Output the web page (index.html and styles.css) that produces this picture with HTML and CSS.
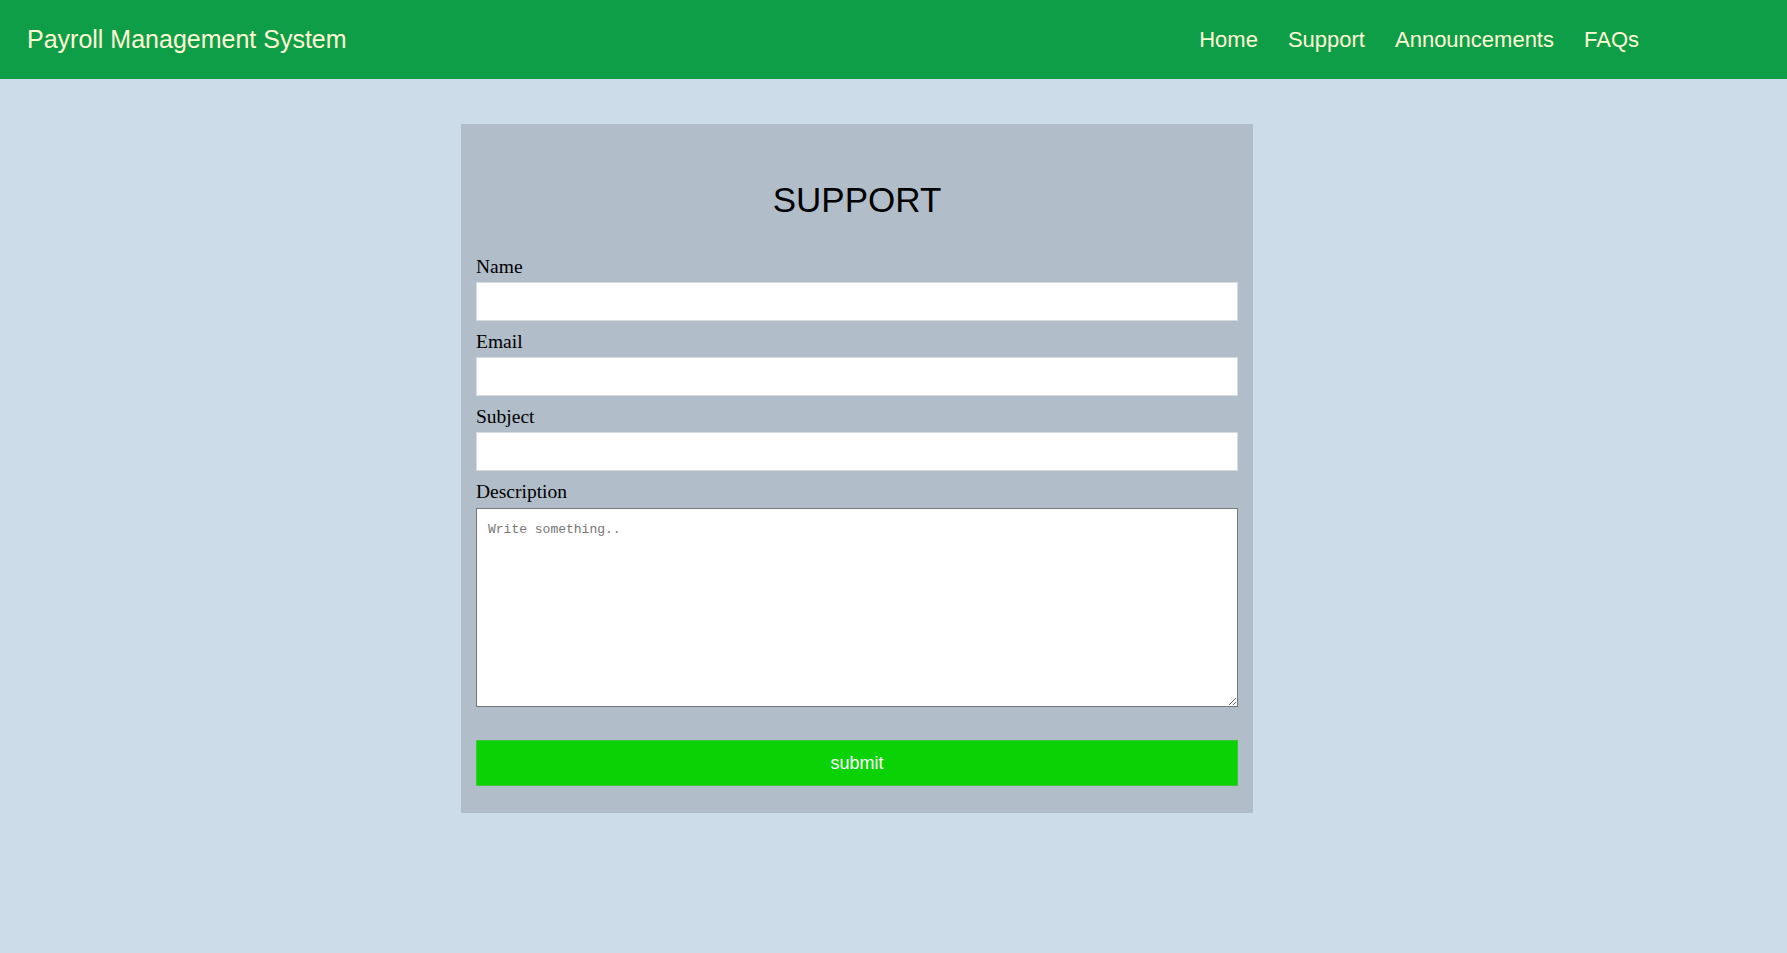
FILE: index.html
```html
<!DOCTYPE html>
<html lang="en">
<head>
<meta charset="utf-8">
<title>Support - Payroll Management System</title>
<link rel="stylesheet" href="styles.css">
</head>
<body>
<header class="topbar">
  <div class="brand">Payroll Management System</div>
  <nav class="nav">
    <a href="#" class="nav-link">Home</a>
    <a href="#" class="nav-link">Support</a>
    <a href="#" class="nav-link">Announcements</a>
    <a href="#" class="nav-link">FAQs</a>
  </nav>
</header>
<main class="page">
  <form class="card">
    <h2 class="card-title">SUPPORT</h2>
    <div class="field">
      <label class="label" for="name">Name</label>
      <input class="input" id="name" type="text">
    </div>
    <div class="field">
      <label class="label" for="email">Email</label>
      <input class="input" id="email" type="text">
    </div>
    <div class="field">
      <label class="label" for="subject">Subject</label>
      <input class="input" id="subject" type="text">
    </div>
    <div class="field">
      <label class="label" for="desc">Description</label>
      <textarea class="textarea" id="desc" placeholder="Write something.."></textarea>
    </div>
    <button type="button" class="submit">submit</button>
  </form>
</main>
</body>
</html>
```

FILE: styles.css
```css
html, body {
  margin: 0;
  padding: 0;
}

body {
  background: #ccdde9;
  min-height: 953px;
  font-family: "Liberation Sans", Arial, sans-serif;
}

.topbar {
  height: 79px;
  background: #0e9e47;
  display: flex;
  align-items: center;
  justify-content: space-between;
  padding: 0 148px 0 27px;
  box-sizing: border-box;
}

.brand {
  color: #fffbd6;
  font-size: 25px;
  line-height: 30px;
  margin-top: -2px;
}

.nav {
  display: flex;
  gap: 30px;
}

.nav-link {
  color: #fffbd6;
  text-decoration: none;
  font-size: 22px;
  line-height: 26px;
}

.page {
  padding-top: 45px;
  padding-bottom: 40px;
}

.card {
  width: 792px;
  margin-left: 461px;
  box-sizing: border-box;
  background: #b1bdc9;
  padding: 56px 15px 27px;
  display: flex;
  flex-direction: column;
}

.card-title {
  margin: 0 0 35px;
  text-align: center;
  font-family: "Liberation Sans", Arial, sans-serif;
  font-weight: normal;
  font-size: 35px;
  line-height: 40px;
  color: #000;
}

.field {
  display: flex;
  flex-direction: column;
  margin-bottom: 9px;
}

.label {
  font-family: "Liberation Serif", "Times New Roman", serif;
  font-size: 19.5px;
  line-height: 24px;
  color: #000;
  margin-bottom: 3px;
}

.input {
  display: block;
  height: 39px;
  box-sizing: border-box;
  border: 1px solid #d6dbe0;
  background: #fff;
  margin: 0;
  padding: 0 10px;
  outline: none;
}

.textarea {
  display: block;
  height: 199px;
  margin: 1px 0 0;
  box-sizing: border-box;
  border: 1px solid #767676;
  background: #fff;
  padding: 13px 11px;
  font-family: "Liberation Mono", "Courier New", monospace;
  font-size: 13px;
  resize: vertical;
}

.textarea::placeholder {
  color: #767676;
}

.submit {
  margin-top: 24px;
  height: 46px;
  border: 1px solid #3fc63a;
  background: #0bd205;
  color: #fff;
  font-family: "Liberation Sans", Arial, sans-serif;
  font-size: 18px;
  padding: 0;
  cursor: pointer;
}
```
